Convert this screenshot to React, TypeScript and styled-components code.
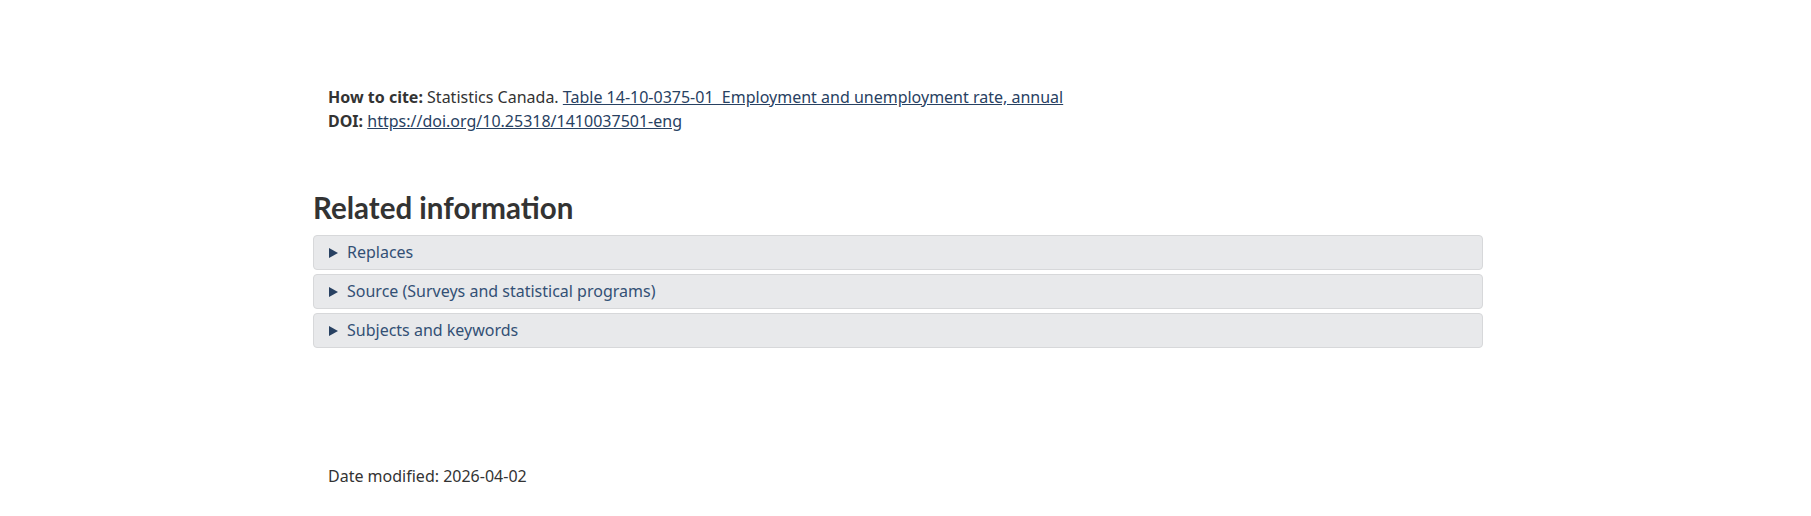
import React from "react";
import styled, { createGlobalStyle } from "styled-components";

const GlobalStyle = createGlobalStyle`
  body {
    margin: 0;
    background: #fff;
    color: #333;
    font-family: "Noto Sans", "DejaVu Sans", sans-serif;
    font-size: 16px;
    line-height: 23px;
  }
`;

const Page = styled.div`
  padding-right: 15px;
`;

const Container = styled.main`
  width: 1170px;
  margin: 0 auto;
`;

const Citation = styled.section`
  padding: 85px 15px 0;
  line-height: 24px;
`;

const Line = styled.p`
  margin: 0;
`;

const Label = styled.strong`
  font-weight: 700;
`;

const Link = styled.a`
  color: #284162;
  text-decoration: underline;
`;

const Heading = styled.h2`
  margin: 59px 0 11px;
  font-family: Lato, "Noto Sans", sans-serif;
  font-size: 29.5px;
  font-weight: 700;
  line-height: 32px;
  color: #333;
`;

const Accordion = styled.div`
  display: flex;
  flex-direction: column;
  gap: 4px;
`;

const Panel = styled.details`
  background: #e8e9eb;
  border: 1px solid #d7d8da;
  border-radius: 4px;
`;

const Summary = styled.summary`
  list-style: none;
  display: flex;
  align-items: center;
  gap: 9px;
  padding: 5px 15px;
  color: #335075;
  cursor: pointer;

  &::-webkit-details-marker {
    display: none;
  }

  &::before {
    content: "";
    width: 0;
    height: 0;
    border-top: 5px solid transparent;
    border-bottom: 5px solid transparent;
    border-left: 9px solid #284162;
  }
`;

const Footer = styled.div`
  padding: 117px 15px 30px;
`;

const sections = [
  "Replaces",
  "Source (Surveys and statistical programs)",
  "Subjects and keywords",
];

export default function App() {
  return (
    <Page>
      <GlobalStyle />
      <Container>
        <Citation>
          <Line>
            <Label>How to cite:</Label> Statistics Canada.{" "}
            <Link href="#">
              Table 14-10-0375-01&nbsp; Employment and unemployment rate, annual
            </Link>
          </Line>
          <Line>
            <Label>DOI:</Label>{" "}
            <Link href="#">https://doi.org/10.25318/1410037501-eng</Link>
          </Line>
        </Citation>
        <Heading>Related information</Heading>
        <Accordion>
          {sections.map((s) => (
            <Panel key={s}>
              <Summary>{s}</Summary>
            </Panel>
          ))}
        </Accordion>
        <Footer>Date modified: 2026-04-02</Footer>
      </Container>
    </Page>
  );
}
